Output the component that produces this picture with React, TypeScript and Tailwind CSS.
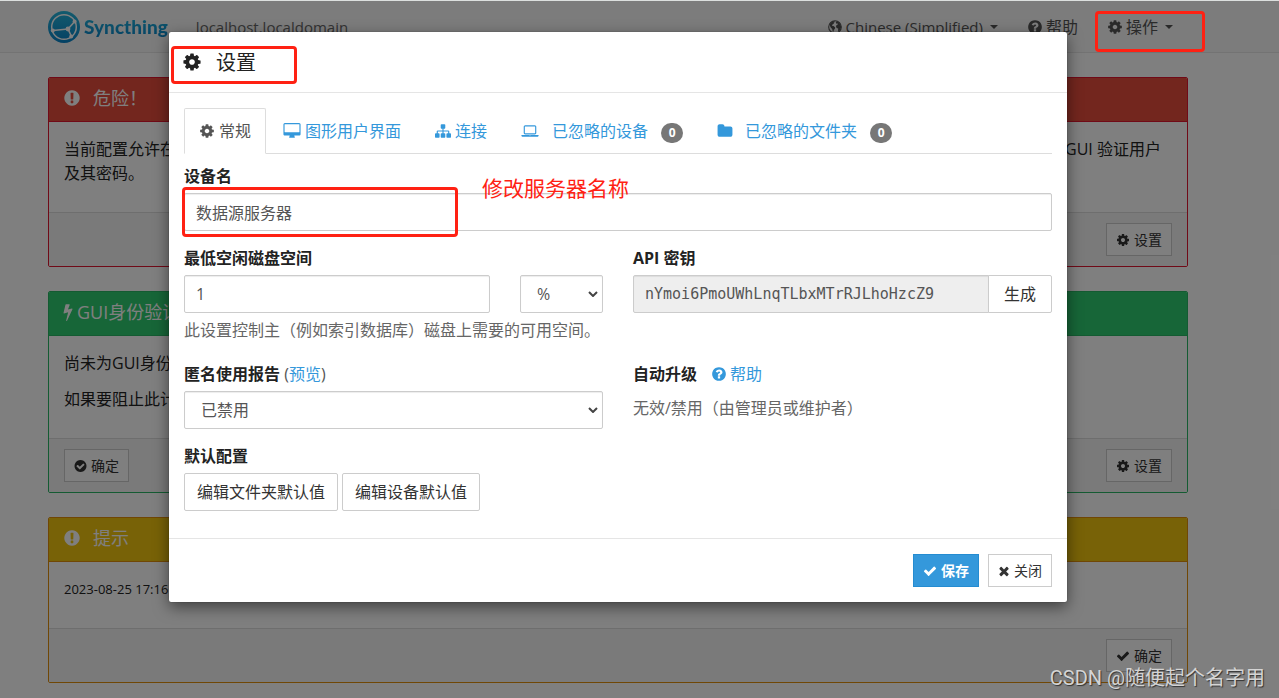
import type { ReactNode } from "react";

const icons = {
  cog: { x: 0, w: 1792, d: "M1152 896q0-106-75-181t-181-75-181 75-75 181 75 181 181 75 181-75 75-181zm512-109v222q0 12-8 23t-20 13l-185 28q-19 54-39 91 35 50 107 138 10 12 10 25t-9 23q-27 37-99 108t-94 71q-12 0-26-9l-138-108q-44 23-91 38-16 136-29 186-7 28-36 28h-222q-14 0-24.5-8.5t-11.5-21.5l-28-184q-49-16-90-37l-141 107q-10 9-25 9-14 0-25-11-126-114-165-168-7-10-7-23 0-12 8-23 15-21 51-66.5t54-70.5q-27-50-41-99l-183-27q-13-2-21-12.5t-8-23.5v-222q0-12 8-23t19-13l186-28q14-46 39-92-40-57-107-138-10-12-10-24 0-10 9-23 26-36 98.5-107.5t94.5-71.5q13 0 26 10l138 107q44-23 91-38 16-136 29-186 7-28 36-28h222q14 0 24.5 8.5t11.5 21.5l28 184q49 16 90 37l142-107q9-9 24-9 13 0 25 10 129 119 165 170 7 8 7 22 0 12-8 23-15 21-51 66.5t-54 70.5q26 50 41 98l183 28q13 2 21 12.5t8 23.5z" },
  check: { x: 0, w: 1792, d: "M1671 566q0 40-28 68l-724 724-136 136q-28 28-68 28t-68-28l-136-136-362-362q-28-28-28-68t28-68l136-136q28-28 68-28t68 28l294 295 656-657q28-28 68-28t68 28l136 136q28 28 28 68z" },
  times: { x: 192, w: 1408, d: "M1490 1322q0 40-28 68l-136 136q-28 28-68 28t-68-28l-294-294-294 294q-28 28-68 28t-68-28l-136-136q-28-28-28-68t28-68l294-294-294-294q-28-28-28-68t28-68l136-136q28-28 68-28t68 28l294 294 294-294q28-28 68-28t68 28l136 136q28 28 28 68t-28 68l-294 294 294 294q28 28 28 68z" },
  checkCircle: { x: 64, w: 1664, d: "M1412 734q0-28-18-46l-91-90q-19-19-45-19t-45 19l-408 407-226-226q-19-19-45-19t-45 19l-91 90q-18 18-18 46 0 27 18 45l362 362q19 19 45 19 27 0 46-19l543-543q18-18 18-45zm252 162q0 209-103 385.5t-279.5 279.5-385.5 103-385.5-103-279.5-279.5-103-385.5 103-385.5 279.5-279.5 385.5-103 385.5 103 279.5 279.5 103 385.5z" },
  exclamation: { x: 0, w: 1792, d: "M896 128q209 0 385.5 103t279.5 279.5 103 385.5-103 385.5-279.5 279.5-385.5 103-385.5-103-279.5-279.5-103-385.5 103-385.5 279.5-279.5 385.5-103zm128 1247v-190q0-14-9-23.5t-22-9.5h-192q-13 0-23 10t-10 23v190q0 13 10 23t23 10h192q13 0 22-9.5t9-23.5zm-2-344l18-621q0-12-10-18-10-8-24-8h-220q-14 0-24 8-10 6-10 18l17 621q0 10 10 17.5t24 7.5h185q14 0 23.5-7.5t10.5-17.5z" },
  question: { x: 0, w: 1792, d: "M1024 1376v-192q0-14-9-23t-23-9h-192q-14 0-23 9t-9 23v192q0 14 9 23t23 9h192q14 0 23-9t9-23zm256-672q0-88-55.5-163t-138.5-116-170-41q-243 0-371 213-15 24 8 42l132 100q7 6 19 6 16 0 25-12 53-68 86-92 34-24 86-24 48 0 85.5 26t37.5 59q0 38-20 61t-68 45q-63 28-115.5 86.5t-52.5 125.5v36q0 14 9 23t23 9h192q14 0 23-9t9-23q0-19 21.5-49.5t54.5-49.5q32-18 49-28.5t46-35 44.5-48 28-60.5 12.5-81zm384 192q0 209-103 385.5t-279.5 279.5-385.5 103-385.5-103-279.5-279.5-103-385.5 103-385.5 279.5-279.5 385.5-103 385.5 103 279.5 279.5 103 385.5z" },
  desktop: { x: 0, w: 1920, d: "M1792 992v-832q0-13-9.5-22.5t-22.5-9.5h-1600q-13 0-22.5 9.5t-9.5 22.5v832q0 13 9.5 22.5t22.5 9.5h1600q13 0 22.5-9.5t9.5-22.5zm128-832v1088q0 66-47 113t-113 47h-544q0 37 16 77.5t32 71 16 43.5q0 26-19 45t-45 19h-512q-26 0-45-19t-19-45q0-14 16-44t32-70 16-78h-544q-66 0-113-47t-47-113v-1088q0-66 47-113t113-47h1600q66 0 113 47t47 113z" },
  sitemap: { x: 0, w: 1792, d: "M1792 1248v320q0 40-28 68t-68 28h-320q-40 0-68-28t-28-68v-320q0-40 28-68t68-28h96v-192h-512v192h96q40 0 68 28t28 68v320q0 40-28 68t-68 28h-320q-40 0-68-28t-28-68v-320q0-40 28-68t68-28h96v-192h-512v192h96q40 0 68 28t28 68v320q0 40-28 68t-68 28h-320q-40 0-68-28t-28-68v-320q0-40 28-68t68-28h96v-192q0-52 38-90t90-38h512v-192h-96q-40 0-68-28t-28-68v-320q0-40 28-68t68-28h320q40 0 68 28t28 68v320q0 40-28 68t-68 28h-96v192h512q52 0 90 38t38 90v192h96q40 0 68 28t28 68z" },
  laptop: { x: 0, w: 1920, d: "M416 1280q-66 0-113-47t-47-113v-704q0-66 47-113t113-47h1088q66 0 113 47t47 113v704q0 66-47 113t-113 47h-1088zm-32-864v704q0 13 9.5 22.5t22.5 9.5h1088q13 0 22.5-9.5t9.5-22.5v-704q0-13-9.5-22.5t-22.5-9.5h-1088q-13 0-22.5 9.5t-9.5 22.5zm1376 928h160v96q0 40-47 68t-113 28h-1600q-66 0-113-28t-47-68v-96h1760zm-720 96q16 0 16-16t-16-16h-160q-16 0-16 16t16 16h160z" },
  folder: { x: 0, w: 1792, d: "M1728 608v704q0 92-66 158t-158 66h-1216q-92 0-158-66t-66-158v-960q0-92 66-158t158-66h320q92 0 158 66t66 158v32h672q92 0 158 66t66 158z" },
  bolt: { x: 448, w: 896, d: "M1333 566q18 20 7 44l-540 1157q-13 25-42 25-4 0-14-2-17-5-25.5-19t-4.5-30l197-808-406 101q-4 1-12 1-18 0-31-11-18-15-13-39l201-825q4-14 16-23t28-9h328q19 0 32 12.5t13 29.5q0 8-5 18l-171 463 396-98q8-2 12-2 19 0 34 15z" },
};

function Icon({ name, className = "size-4" }: { name: keyof typeof icons; className?: string }) {
  const { x, w, d } = icons[name];
  return (
    <svg viewBox={`${x} 0 ${w} 1792`} fill="currentColor" aria-hidden="true" className={`shrink-0 ${className}`}>
      <path d={d} />
    </svg>
  );
}

function Globe() {
  return (
    <svg viewBox="0 0 16 16" aria-hidden="true" className="size-4 shrink-0">
      <circle cx="8" cy="8" r="6.300" fill="none" stroke="currentColor" strokeWidth="1.100" />
      <path fill="currentColor" d="M2.500 5.200 4.800 2.800 7.200 2l.8.9-1.300.8.300.9-1.500.8-.6 1.300 1.700.3 1.600 1.400-.4 1.600-.9.8-.4 2-.8-.3-.5-2.500-1.300-1.300L3.200 7.500zM8.800 2.500l2.700.4 2 2.300.7 2.900-.9 2.600-1.600 1.900-.7-1 .2-2-1.600-.7-.7-1.800 1.100-1.400 1-.4-.3-.8-1.100.3-.7-.9z" />
    </svg>
  );
}

function Logo() {
  return (
    <svg viewBox="0 0 32 32" aria-hidden="true" className="size-8 shrink-0">
      <defs>
        <linearGradient id="brand" x1="0" y1="1" x2="0" y2="0">
          <stop offset="0" stopColor="#0882c8" />
          <stop offset="1" stopColor="#26b6db" />
        </linearGradient>
      </defs>
      <circle cx="16" cy="16" r="16" fill="url(#brand)" />
      <circle cx="16" cy="16" r="12.300" fill="none" stroke="#fff" strokeWidth="1.500" />
      <g stroke="#fff" strokeWidth="1.600" fill="none">
        <path d="M20 18 26.700 10.500" />
        <path d="M20 18 5 19.500" />
        <path d="M20 18 23.500 25.500" />
      </g>
      <g fill="#fff">
        <circle cx="26.600" cy="10.600" r="2" />
        <circle cx="20" cy="18" r="2.400" />
        <circle cx="4.800" cy="19.600" r="2" />
        <circle cx="23.200" cy="25.600" r="2" />
      </g>
    </svg>
  );
}

function Caret() {
  return <span aria-hidden="true" className="ml-1 border-x-4 border-t-4 border-x-transparent border-t-current" />;
}

function Button({ children, primary = false }: { children: ReactNode; primary?: boolean }) {
  const look = primary ? "border-[#258cd1] bg-[#3498db] font-bold text-white" : "border-[#ccc] bg-white text-[#333]";
  return (
    <button type="button" className={`flex h-[33px] items-center gap-1 border px-[9px] text-sm ${look}`}>
      {children}
    </button>
  );
}

function Card(props: { border: string; head: string; title: ReactNode; footer: ReactNode; children: ReactNode }) {
  return (
    <section className={`mb-6 overflow-hidden rounded-xs border ${props.border}`}>
      <h3 className={`flex h-11 items-center border-b px-[14px] pb-[3px] text-lg text-white ${props.border} ${props.head}`}>
        {props.title}
      </h3>
      <div className="space-y-3 bg-white px-[15px] pt-[15px] pb-[27px] leading-6">{props.children}</div>
      <div className="flex justify-between border-t border-[#ddd] bg-[#f5f5f5] px-[15px] py-[10px]">{props.footer}</div>
    </section>
  );
}

function Tab({ active = false, children }: { active?: boolean; children: ReactNode }) {
  const look = active ? "border-[#ddd] border-b-white bg-white text-[#555]" : "border-transparent text-[#3498db]";
  return (
    <button
      type="button"
      role="tab"
      aria-selected={active}
      className={`-mb-px flex h-[46px] items-center rounded-t-xs border px-[14px] ${look}`}
    >
      {children}
    </button>
  );
}

function Badge({ count }: { count: number }) {
  return (
    <span className="mt-1 ml-[13px] flex h-5 w-[22px] items-center justify-center rounded-full bg-[#777] text-xs font-bold text-white">
      {count}
    </span>
  );
}

const control = "h-[38px] w-full rounded-xs border border-[#ccc] bg-white px-[11px] text-[#555] shadow-[inset_0_1px_1px_rgba(0,0,0,0.075)]";
const labelStyle = "font-bold text-[#222]";

function Select({ id, label, value }: { id: string; label: string; value: string }) {
  return (
    <div className="relative">
      <select id={id} aria-label={label} className={`${control} appearance-none pl-4`}>
        <option>{value}</option>
      </select>
      <svg viewBox="0 0 10 6" aria-hidden="true" className="pointer-events-none absolute top-4 right-[5px] h-[6px] w-[10px]">
        <path d="M1 1l4 4 4-4" fill="none" stroke="#444" strokeWidth="2" />
      </svg>
    </div>
  );
}

function Page() {
  return (
    <div className="bg-white">
      <nav className="border-b border-[#e7e7e7] bg-[#f8f8f8] pr-[43px] text-[#666]">
        <div className="mx-auto flex h-[51px] max-w-[1140px] items-center pr-[15px]">
          <a href="#" className="flex items-center gap-1">
            <Logo />
            <span className="bg-linear-to-t from-[#0882c8] to-[#26b6db] bg-clip-text font-['Lato','Noto_Sans',sans-serif] text-[19px] font-black text-transparent">
              Syncthing
            </span>
          </a>
          <span className="ml-7 text-[15px]">localhost.localdomain</span>
          <div className="ml-auto flex items-center gap-[29px] text-[#555]">
            <button type="button" className="flex items-center gap-[3px]">
              <Globe />
              <span className="text-[15px]">Chinese (Simplified)</span>
              <Caret />
            </button>
            <a href="#" className="flex items-center gap-[3px]">
              <Icon name="question" />
              帮助
            </a>
            <button type="button" className="flex items-center gap-[3px]">
              <Icon name="cog" />
              操作
              <Caret />
            </button>
          </div>
        </div>
      </nav>
      <main className="pt-6 pr-[43px] text-[#222]">
        <div className="mx-auto max-w-[1140px]">
          <Card
            border="border-[#e0152f]"
            head="bg-[#e74c3c]"
            title={<><Icon name="exclamation" className="size-[18px]" /><span className="ml-3">危险！</span></>}
            footer={<><span /><Button><Icon name="cog" className="size-[14px]" />设置</Button></>}
          >
            <p>
              <span className="flex justify-between pr-[11px]"><span>当前配置允许在</span><span>GUI 验证用户</span></span>
              及其密码。
            </p>
          </Card>
          <Card
            border="border-[#29b765]"
            head="bg-[#2ecc71]"
            title={<><Icon name="bolt" className="h-[18px] w-[10px]" /><span className="ml-1">GUI身份验证</span></>}
            footer={<><Button><Icon name="checkCircle" className="h-[14px] w-[13px]" />确定</Button><Button><Icon name="cog" className="size-[14px]" />设置</Button></>}
          >
            <p>尚未为GUI身份</p>
            <p>如果要阻止此计</p>
          </Card>
          <Card
            border="border-[#e08e0b]"
            head="bg-[#f1c40f]"
            title={<><Icon name="exclamation" className="size-[18px]" /><span className="ml-3">提示</span></>}
            footer={<><span /><Button><Icon name="check" className="size-[14px]" />确定</Button></>}
          >
            <p className="text-[13px] leading-6">2023-08-25 17:16</p>
          </Card>
        </div>
      </main>
    </div>
  );
}

function SettingsDialog() {
  return (
    <div
      role="dialog"
      aria-labelledby="settings-title"
      className="mx-auto max-w-[898px] rounded-xs bg-white text-[#222] shadow-[0_5px_15px_rgba(0,0,0,0.5),0_0_1px_rgba(0,0,0,0.6)]"
    >
      <header className="flex h-[61px] items-center border-b border-[#e5e5e5] px-[13px]">
        <Icon name="cog" className="size-5" />
        <h4 id="settings-title" className="ml-[14px] pt-[2px] text-xl">设置</h4>
      </header>
      <div className="px-[15px] pt-[15px] pb-[27px]">
        <div role="tablist" className="flex gap-[2px] border-b border-[#ddd]">
          <Tab active><Icon name="cog" /><span className="ml-1">常规</span></Tab>
          <Tab><Icon name="desktop" className="h-4 w-[18px]" /><span className="ml-1">图形用户界面</span></Tab>
          <Tab><Icon name="sitemap" className="ml-[2px] size-4" /><span className="ml-1">连接</span></Tab>
          <Tab><Icon name="laptop" className="ml-[2px] h-4 w-[18px]" /><span className="ml-[13px]">已忽略的设备</span><Badge count={0} /></Tab>
          <Tab><Icon name="folder" className="ml-[2px] size-4" /><span className="ml-3">已忽略的文件夹</span><Badge count={0} /></Tab>
        </div>
        <div className="mt-[10px]">
          <label htmlFor="device-name" className={`mb-[5px] block ${labelStyle}`}>设备名</label>
          <input id="device-name" defaultValue="数据源服务器" className={control} />
        </div>
        <div className="mt-[15px] grid grid-cols-2 gap-x-[30px]">
          <div>
            <label htmlFor="free-space" className={`mb-[5px] block ${labelStyle}`}>最低空闲磁盘空间</label>
            <div className="grid grid-cols-[1fr_83px] gap-[30px]">
              <input id="free-space" defaultValue="1" className={control} />
              <Select id="free-space-unit" label="%" value="%" />
            </div>
            <p className="mt-[5px] whitespace-nowrap text-[#666]">此设置控制主（例如索引数据库）磁盘上需要的可用空间。</p>
          </div>
          <div>
            <label htmlFor="api-key" className={`mb-[5px] block ${labelStyle}`}>API 密钥</label>
            <div className="flex">
              <input
                id="api-key"
                readOnly
                defaultValue="nYmoi6PmoUWhLnqTLbxMTrRJLhoHzcZ9"
                className="h-[38px] min-w-0 flex-1 rounded-l-xs border border-[#ccc] bg-[#eee] px-[11px] font-['DejaVu_Sans_Mono',monospace] text-[15px] text-[#555] shadow-[inset_0_1px_1px_rgba(0,0,0,0.075)]"
              />
              <button type="button" className="-ml-px h-[38px] rounded-r-xs border border-[#ccc] bg-white px-[15px] text-[#333]">生成</button>
            </div>
          </div>
        </div>
        <div className="mt-5 grid grid-cols-2 gap-x-[30px]">
          <div>
            <div className="mb-[5px] text-[#555]">
              <label htmlFor="usage-report" className={labelStyle}>匿名使用报告</label> (<a href="#" className="text-[#3498db]">预览</a>)
            </div>
            <Select id="usage-report" label="匿名使用报告" value="已禁用" />
          </div>
          <div>
            <div className="flex items-center">
              <span className={labelStyle}>自动升级</span>
              <a href="#" className="ml-[14px] flex items-center gap-[3px] text-[#3498db]"><Icon name="question" />帮助</a>
            </div>
            <p className="mt-[10px] text-[#666]">无效/禁用（由管理员或维护者）</p>
          </div>
        </div>
        <div className="mt-[15px]">
          <div className={`mb-[5px] ${labelStyle}`}>默认配置</div>
          <div className="flex gap-1">
            <button type="button" className="h-[38px] rounded-xs border border-[#ccc] px-3 text-[#333]">编辑文件夹默认值</button>
            <button type="button" className="h-[38px] rounded-xs border border-[#ccc] px-3 text-[#333]">编辑设备默认值</button>
          </div>
        </div>
      </div>
      <footer className="flex justify-end gap-[9px] border-t border-[#e5e5e5] p-[15px]">
        <Button primary><Icon name="check" className="size-[14px]" />保存</Button>
        <Button><Icon name="times" className="h-[14px] w-3" />关闭</Button>
      </footer>
    </div>
  );
}

const mark = "pointer-events-none absolute rounded-sm border-3 border-[#ff2113]";

export default function App() {
  return (
    <div className="relative h-screen overflow-hidden border-t border-[#dcdfde] bg-white font-['Open_Sans','Noto_Sans_CJK_SC',sans-serif] text-base leading-6">
      <Page />
      <div className="absolute inset-0 bg-black/50 pt-[31px] pr-[43px]">
        <SettingsDialog />
      </div>
      <div className={`${mark} top-[10px] left-[1095px] h-[41px] w-[110px]`} />
      <div className={`${mark} top-[45px] left-[171px] h-[38px] w-[126px]`} />
      <div className={`${mark} top-[186px] left-[182px] h-[50px] w-[276px]`} />
      <div className="pointer-events-none absolute top-[175px] left-[482px] text-[21px] text-[#ff2113]">修改服务器名称</div>
      <div className="pointer-events-none absolute right-[14px] bottom-[8px] font-['Roboto','Noto_Sans_CJK_SC',sans-serif] text-xl leading-6 text-[#d4d4d4] [text-shadow:1px_1px_1px_#333]">
        CSDN @随便起个名字用
      </div>
    </div>
  );
}
